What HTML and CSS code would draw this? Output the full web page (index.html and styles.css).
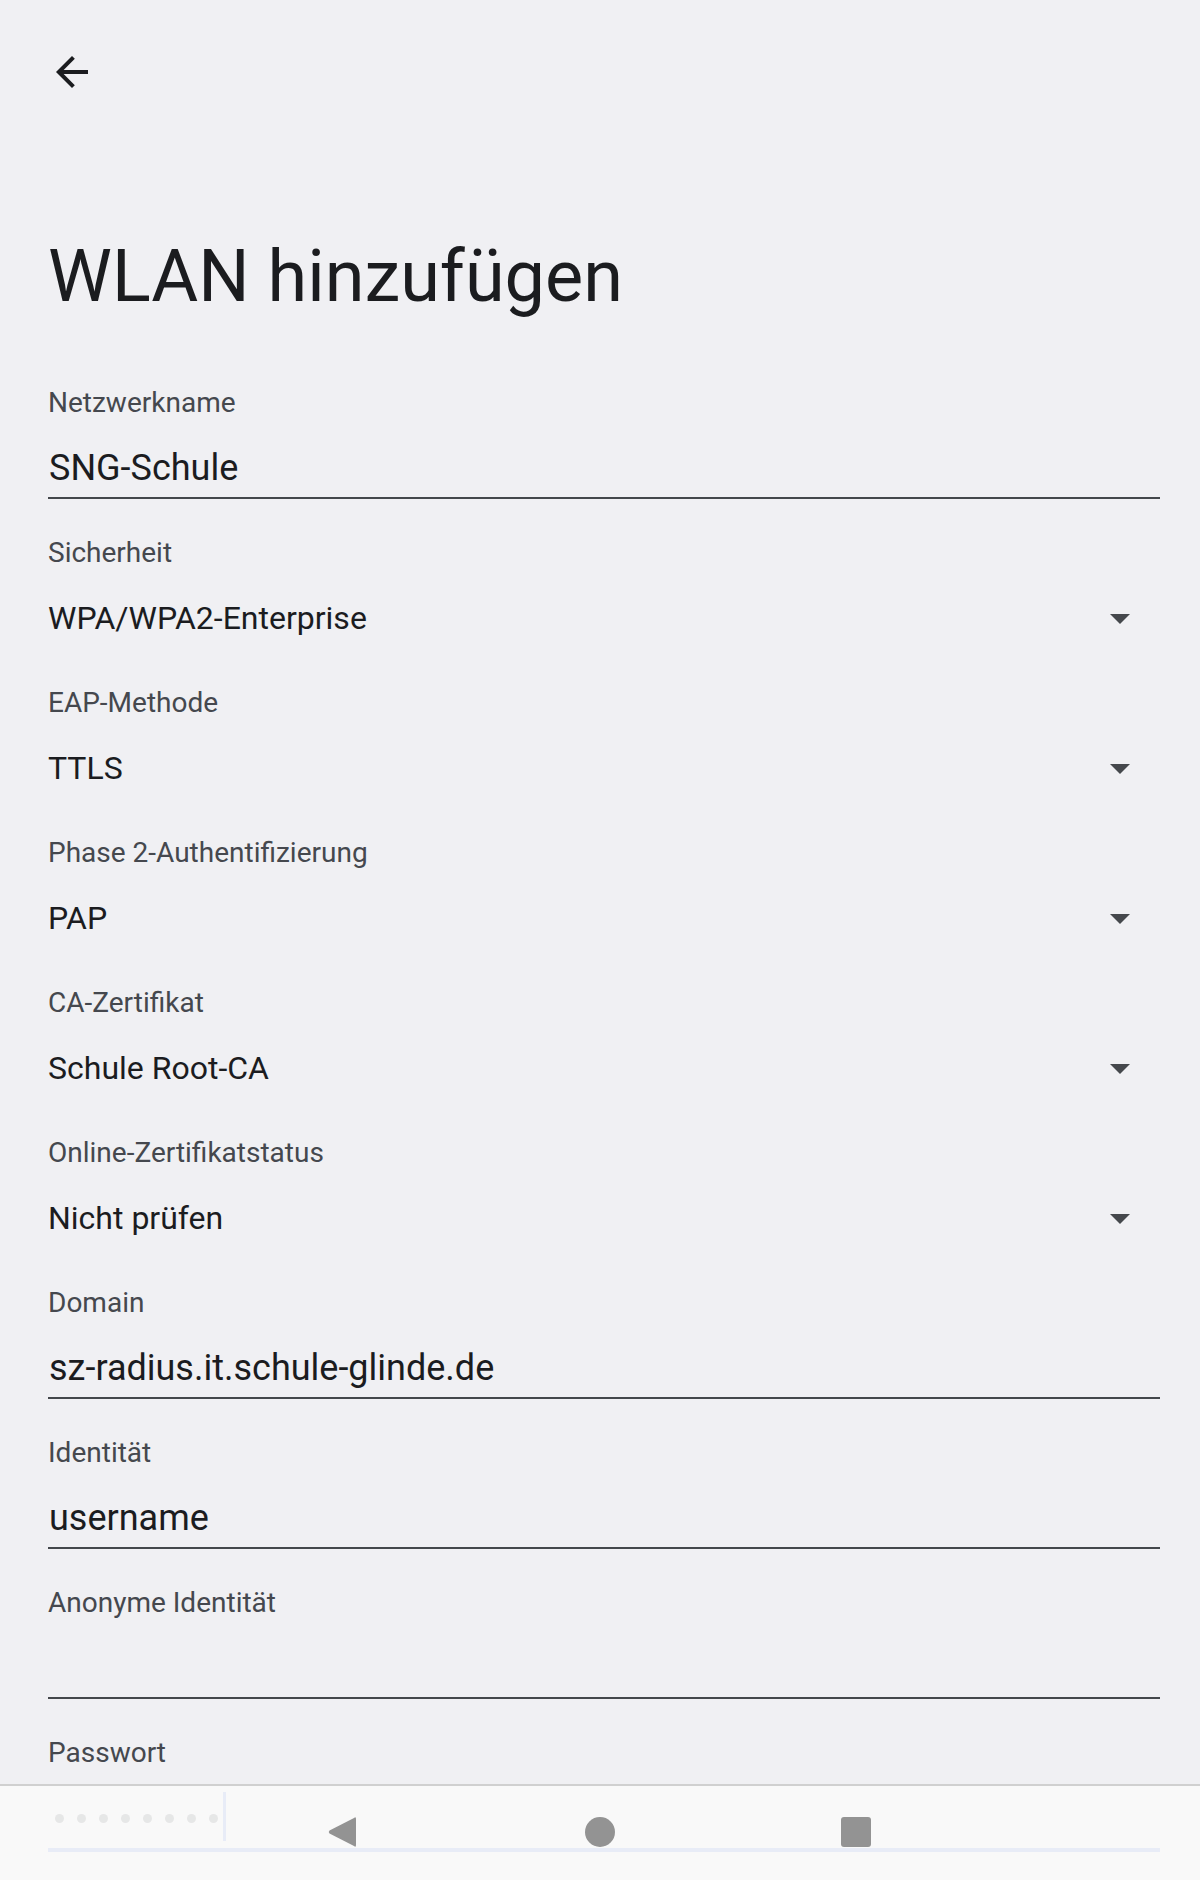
FILE: index.html
```html
<!DOCTYPE html>
<html lang="de">
<head>
<meta charset="utf-8">
<title>WLAN hinzufügen</title>
<link rel="stylesheet" href="styles.css">
</head>
<body>
<main class="page">
  <header class="topbar">
    <button class="icon-btn" aria-label="Zurück">
      <svg viewBox="0 0 24 24" width="48" height="48"><path d="M20 11H7.83l5.59-5.59L12 4l-8 8 8 8 1.41-1.41L7.83 13H20v-2z" fill="#1b1c1f"/></svg>
    </button>
  </header>
  <h1 class="title">WLAN hinzufügen</h1>

  <div class="form">
    <div class="field">
      <div class="label">Netzwerkname</div>
      <div class="value">SNG-Schule</div>
      <div class="line"></div>
    </div>
    <div class="field select">
      <div class="label">Sicherheit</div>
      <div class="value"><span>WPA/WPA2-Enterprise</span><svg class="drop" viewBox="0 0 24 24" width="48" height="48"><path d="M7 10l5 5 5-5z"/></svg></div>
      <div class="line"></div>
    </div>
    <div class="field select">
      <div class="label">EAP-Methode</div>
      <div class="value"><span>TTLS</span><svg class="drop" viewBox="0 0 24 24" width="48" height="48"><path d="M7 10l5 5 5-5z"/></svg></div>
      <div class="line"></div>
    </div>
    <div class="field select">
      <div class="label">Phase 2-Authentifizierung</div>
      <div class="value"><span>PAP</span><svg class="drop" viewBox="0 0 24 24" width="48" height="48"><path d="M7 10l5 5 5-5z"/></svg></div>
      <div class="line"></div>
    </div>
    <div class="field select">
      <div class="label">CA-Zertifikat</div>
      <div class="value"><span>Schule Root-CA</span><svg class="drop" viewBox="0 0 24 24" width="48" height="48"><path d="M7 10l5 5 5-5z"/></svg></div>
      <div class="line"></div>
    </div>
    <div class="field select">
      <div class="label">Online-Zertifikatstatus</div>
      <div class="value"><span>Nicht prüfen</span><svg class="drop" viewBox="0 0 24 24" width="48" height="48"><path d="M7 10l5 5 5-5z"/></svg></div>
      <div class="line"></div>
    </div>
    <div class="field">
      <div class="label">Domain</div>
      <div class="value">sz-radius.it.schule-glinde.de</div>
      <div class="line"></div>
    </div>
    <div class="field">
      <div class="label">Identität</div>
      <div class="value">username</div>
      <div class="line"></div>
    </div>
    <div class="field">
      <div class="label">Anonyme Identität</div>
      <div class="value"></div>
      <div class="line"></div>
    </div>
    <div class="field focused">
      <div class="label">Passwort</div>
      <div class="value pw">
        <span class="dot"></span><span class="dot"></span><span class="dot"></span><span class="dot"></span><span class="dot"></span><span class="dot"></span><span class="dot"></span><span class="dot"></span><span class="cursor"></span>
      </div>
      <div class="line"></div>
    </div>
  </div>
</main>

<nav class="navbar">
  <svg class="nav-back" viewBox="0 0 28 32" width="28" height="32"><path d="M26 2 Q28 0 28 3 V29 Q28 32 26 30 L1.5 17.5 Q0 16 1.5 14.5 Z" fill="#939393"/></svg>
  <span class="nav-home"></span>
  <span class="nav-recent"></span>
</nav>
</body>
</html>
```

FILE: styles.css
```css
html, body {
  margin: 0;
  padding: 0;
}
body {
  background: #f0f0f3;
  font-family: Roboto, "Noto Sans", "Liberation Sans", sans-serif;
  color: #1b1c1f;
  height: 1880px;
  overflow: hidden;
}
.page {
  padding: 48px 40px 0 48px;
}
.topbar {
  height: 48px;
  display: flex;
  align-items: center;
}
.icon-btn {
  border: 0;
  background: none;
  padding: 0;
  width: 48px;
  height: 48px;
  display: block;
}
.icon-btn svg {
  display: block;
}
.title {
  margin: 137px 0 0 0;
  font-weight: 400;
  font-size: 72px;
  line-height: 88px;
  height: 88px;
  color: #1b1c1f;
}
.form {
  margin-top: 64px;
}
.field {
  height: 150px;
}
.label {
  font-size: 28px;
  line-height: 36px;
  height: 36px;
  color: #45484e;
}
.value {
  margin-top: 23px;
  height: 48px;
  font-size: 36px;
  line-height: 48px;
  color: #1b1c1f;
  display: flex;
  align-items: center;
  justify-content: space-between;
  padding-left: 1px;
}
.select .value {
  font-size: 32px;
  padding-left: 0;
}
.drop {
  fill: #45484c;
  margin-right: 16px;
  flex: none;
}
.line {
  margin-top: 5px;
  height: 2px;
  background: #44474b;
}
.select .line {
  background: transparent;
}
.pw {
  justify-content: flex-start;
  padding-left: 7px;
}
.dot {
  width: 9px;
  height: 9px;
  border-radius: 50%;
  background: #2a2c30;
  margin-right: 13px;
  flex: none;
}
.cursor {
  width: 3px;
  height: 49px;
  background: #3a66d6;
  margin-left: -8px;
  align-self: flex-start;
  margin-top: -2px;
}
.focused .line {
  margin-top: 6px;
  height: 4px;
  background: #3a66d6;
}
.navbar {
  position: fixed;
  left: 0;
  right: 0;
  bottom: 0;
  height: 94px;
  border-top: 2px solid #d0d0d0;
  background: rgba(250, 250, 250, 0.91);
}
.nav-back {
  position: absolute;
  left: 328px;
  top: 30px;
}
.nav-home {
  position: absolute;
  left: 585px;
  top: 31px;
  width: 30px;
  height: 30px;
  border-radius: 50%;
  background: #939393;
}
.nav-recent {
  position: absolute;
  left: 841px;
  top: 31px;
  width: 30px;
  height: 30px;
  border-radius: 3px;
  background: #939393;
}
```
